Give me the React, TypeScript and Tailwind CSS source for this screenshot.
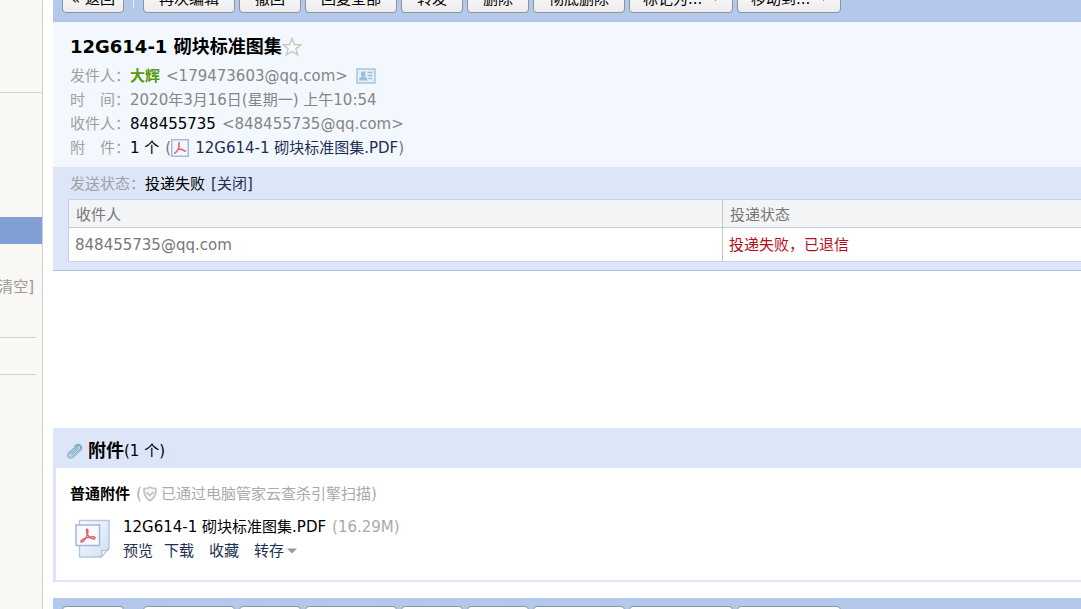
import React from "react";

interface ToolbarProps {
  position: "top" | "bottom";
}

const actions = ["再次编辑", "撤回", "回复全部", "转发", "删除", "彻底删除"];
const menus = ["标记为...", "移动到..."];

const buttonStyle =
  "h-7 shrink-0 whitespace-nowrap rounded border border-[#8f959f] bg-linear-to-b from-white to-[#ececec] text-black";

const Toolbar: React.FC<ToolbarProps> = ({ position }) => {
  return (
    <div
      className={`flex shrink-0 gap-1 overflow-hidden bg-[#b4c8ec] px-[9px] ${
        position === "top"
          ? "h-[22px] items-end border-b border-[#adc3e6] pb-2"
          : "h-11 items-start pt-2"
      }`}
    >
      <button className={`${buttonStyle} px-2`}>« 返回</button>
      <span
        className={`mx-[5px] h-7 w-px shrink-0 ${
          position === "top" ? "mb-1 bg-[#e9effa]" : ""
        }`}
      ></span>
      {actions.map((name) => (
        <button key={name} className={`${buttonStyle} px-[15px]`}>
          {name}
        </button>
      ))}
      {menus.map((name) => (
        <button
          key={name}
          className={`${buttonStyle} flex w-[104px] items-center justify-between px-[13px]`}
        >
          {name}
          <svg width="7" height="4" viewBox="0 0 7 4">
            <path d="M0 0h7L3.5 4z" fill="#777" />
          </svg>
        </button>
      ))}
    </div>
  );
};

const Sidebar: React.FC = () => {
  return (
    <aside className="w-[43px] shrink-0 border-r border-[#cfcfcf] bg-[#f9f8f4]">
      <div className="h-[93px] border-b border-[#d2d1cc]"></div>
      <div className="h-31"></div>
      <div className="h-[27px] bg-[#819fd2]"></div>
      <div className="flex h-[93px] justify-end overflow-hidden pr-2 pt-[31px] leading-6 text-[#999]">
        <a href="#" className="whitespace-nowrap">
          [清空]
        </a>
      </div>
      <div className="mr-1.5 h-[38px] border-y border-[#d2d1cc]"></div>
    </aside>
  );
};

const StarIcon: React.FC = () => (
  <svg width="20" height="20" viewBox="0 0 20 20" fill="none">
    <path
      d="M10 1.500l2.300 6 6.500.2-5 4 1.800 6.200-5.600-3.600-5.600 3.600 1.800-6.200-5-4 6.500-.2z"
      fill="#fbfbfb"
      stroke="#c9c9c9"
      strokeWidth="1.5"
    />
  </svg>
);

const CardIcon: React.FC = () => (
  <svg width="20" height="16" viewBox="0 0 20 16">
    <rect x="1" y="1" width="18" height="14" fill="#e4f0f9" stroke="#a9c5de" strokeWidth="1.5" />
    <rect x="5" y="3.500" width="4.500" height="5" rx="1.500" fill="#9bbddd" />
    <path d="M3 12.500c0-2.800 1.500-4 4.200-4s4.300 1.200 4.300 4z" fill="#9bbddd" />
    <path d="M11.500 4.500h5M11.500 7.500h5M12.500 10.500h4" stroke="#9bbddd" strokeWidth="1.300" />
  </svg>
);

const PdfIcon: React.FC = () => (
  <svg width="18" height="18" viewBox="0 0 18 18" fill="none">
    <rect x=".75" y=".75" width="16.5" height="16.5" fill="#f3f6fd" stroke="#a9b9d8" strokeWidth="1.5" />
    <path
      d="M8 3.500c.2 2.500.2 4.500-.6 6.300M7.400 9.800c-1 2-2.200 3.400-3.600 4.400M7.400 10.200c2.400-.4 4.600.4 6.800 2"
      stroke="#e06a6e"
      strokeWidth="1.600"
      strokeLinecap="round"
    />
  </svg>
);

const PdfFileIcon: React.FC = () => (
  <svg width="36" height="40" viewBox="0 0 36 40" fill="none" className="shrink-0">
    <defs>
      <linearGradient id="sheet" x1="0" y1="0" x2="1" y2="1">
        <stop offset="0" stopColor="#fbfdff" />
        <stop offset="1" stopColor="#cfdef3" />
      </linearGradient>
    </defs>
    <path
      d="M4.500 1.500h29.500v28l-8 8.500h-21.500z"
      fill="url(#sheet)"
      stroke="#b3c7e3"
      strokeWidth="1.500"
    />
    <path d="M34 29.500c-2 2-4 2.500-7.500 2 .5 3 .5 4.500-.5 6.500z" fill="#f7faff" stroke="#9fb6d8" />
    <rect x="1" y="6" width="23.500" height="20.500" fill="#f8faff" stroke="#a5b6da" strokeWidth="1.500" />
    <path
      d="M11.500 10.500c-.8.800.3 3 .8 5l-1.300 3.300c-2 .6-4.300 1.700-5 3-.4 1.400 1 1.700 2 .6 1-1 2.300-2.500 3-3.600l3.500-.6c1.700 1.200 3.500 2 4.800 1.800 1.400-.4.900-2-.7-2.200-1.300-.1-2.700 0-4.100.4l-2.200-2.700c.6-1.800.9-3.700.4-4.800-.3-.5-.8-.6-1.200-.2z"
      stroke="#dc6268"
      strokeWidth="1.400"
    />
  </svg>
);

const ClipIcon: React.FC = () => (
  <svg width="17" height="18" viewBox="0 0 17 18" fill="none" strokeLinecap="round">
    <path
      d="M5.800 12.200l5.400-5c1.700-1.700-.2-3.300-1.800-1.800L3.400 10.800c-3 3.200.5 6.600 3.900 3.800l6.400-6.200c3.400-3.600-.6-7.400-4.400-4.300"
      stroke="#7fa8c6"
      strokeWidth="2"
    />
    <path
      d="M5.800 12.200l5.400-5c1.700-1.700-.2-3.300-1.800-1.800L3.400 10.800c-3 3.200.5 6.600 3.900 3.800l6.400-6.200"
      stroke="#cfe3f0"
      strokeWidth=".6"
    />
  </svg>
);

const ShieldIcon: React.FC = () => (
  <svg width="16" height="16" viewBox="0 0 16 16" fill="none">
    <path
      d="M8 1.200c2 1 4 1.400 6 1.400.3 5.200-1.400 9.500-6 12-4.600-2.500-6.300-6.800-6-12 2 0 4-.4 6-1.400z"
      fill="#f6f6f6"
      stroke="#c3c3c3"
      strokeWidth="1.800"
    />
    <path d="M4.500 6.300L7.800 9.300l3.900-3.500" stroke="#c3c3c3" strokeWidth="1.800" />
  </svg>
);

const MailHeader: React.FC = () => {
  return (
    <header className="bg-[#f3f8ff] pb-[7px] pl-[17px] pt-2 leading-6 text-[#a0a0a0]">
      <div className="flex h-[34px] items-center">
        <h1 className="text-lg font-bold text-black">12G614-1 砌块标准图集</h1>
        <button aria-label="星标">
          <StarIcon />
        </button>
      </div>
      <div className="flex items-center">
        <span>发件人：</span>
        <a href="#" className="font-bold text-[#5b9a0c]">
          大辉
        </a>
        <span className="ml-1.5 text-[#858585]">&lt;179473603@qq.com&gt;</span>
        <button aria-label="联系人" className="ml-2">
          <CardIcon />
        </button>
      </div>
      <div className="flex items-center">
        <span>时　间：</span>
        <span className="text-[#858585]">2020年3月16日(星期一) 上午10:54</span>
      </div>
      <div className="flex items-center">
        <span>收件人：</span>
        <span className="text-black">848455735</span>
        <span className="ml-1.5 text-[#858585]">&lt;848455735@qq.com&gt;</span>
      </div>
      <div className="flex items-center">
        <span>附　件：</span>
        <span className="text-black">1 个</span>
        <span className="ml-1.5 text-[#777]">(</span>
        <PdfIcon />
        <a href="#" className="ml-1.5 text-[#1d2f50]">
          12G614-1 砌块标准图集.PDF
        </a>
        <span className="text-[#777]">)</span>
      </div>
    </header>
  );
};

const SendStatus: React.FC = () => {
  return (
    <section className="border-b border-[#a9bfe0] bg-[#dde6f8] pb-2 pl-[15px]">
      <p className="flex h-8 px-0.5 leading-[34px] text-[#a0a0a0]">
        发送状态：<span className="text-black">投递失败</span>
        <a href="#" className="ml-1.5 text-[#1d2f50]">
          [关闭]
        </a>
      </p>
      <table className="w-full border-collapse border border-r-0 border-[#c5d3ea] bg-white text-left text-[#777]">
        <thead>
          <tr className="h-7 border-b border-[#c3c9d0] bg-[#f3f4f6]">
            <th className="w-[654px] border-r border-[#c3c9d0] px-[7px] pt-[3px] font-normal">
              收件人
            </th>
            <th className="px-[7px] pt-[3px] font-normal">投递状态</th>
          </tr>
        </thead>
        <tbody>
          <tr className="h-[34px]">
            <td className="border-r border-[#c3c9d0] px-1.5 pt-0.5">848455735@qq.com</td>
            <td className="px-1.5 pt-0.5 text-[#b3101c]">投递失败，已退信</td>
          </tr>
        </tbody>
      </table>
    </section>
  );
};

const Attachments: React.FC = () => {
  return (
    <section className="mb-4 border-b-2 border-l-3 border-[#dde6f8] leading-6">
      <div className="flex h-10 items-center bg-[#dde6f8] pl-[10px] pt-1.5">
        <ClipIcon />
        <h2 className="ml-[5px] text-lg leading-6 font-bold text-black">附件</h2>
        <span className="text-black">(1 个)</span>
      </div>
      <div className="px-[14px] pb-[17px] pt-[14px]">
        <div className="flex items-center text-[#aaa]">
          <span className="font-bold text-black">普通附件</span>
          <span className="ml-1.5">(</span>
          <ShieldIcon />
          <span className="ml-[3px]">已通过电脑管家云查杀引擎扫描)</span>
        </div>
        <div className="mt-[9px] flex items-center pl-[5px]">
          <PdfFileIcon />
          <div className="ml-3">
            <p className="flex text-black">
              <span>12G614-1 砌块标准图集.PDF</span>
              <span className="ml-1.5 text-[#aaa]">(16.29M)</span>
            </p>
            <div className="flex text-[#1d2f50]">
              <a href="#">预览</a>
              <a href="#" className="ml-[11px]">
                下载
              </a>
              <a href="#" className="ml-[15px]">
                收藏
              </a>
              <button className="ml-[15px] flex items-center gap-[3px]">
                转存
                <svg width="10" height="6" viewBox="0 0 10 6">
                  <path d="M0 .5h10L5 5.500z" fill="#999" />
                </svg>
              </button>
            </div>
          </div>
        </div>
      </div>
    </section>
  );
};

export default function App() {
  return (
    <div className="flex h-screen overflow-hidden bg-white font-['DejaVu_Sans','Noto_Sans_CJK_SC',sans-serif] text-[15px]">
      <Sidebar />
      <main className="ml-[10px] flex min-w-0 flex-1 flex-col">
        <Toolbar position="top" />
        <MailHeader />
        <SendStatus />
        <article className="min-h-[157px]"></article>
        <Attachments />
        <Toolbar position="bottom" />
      </main>
    </div>
  );
}
